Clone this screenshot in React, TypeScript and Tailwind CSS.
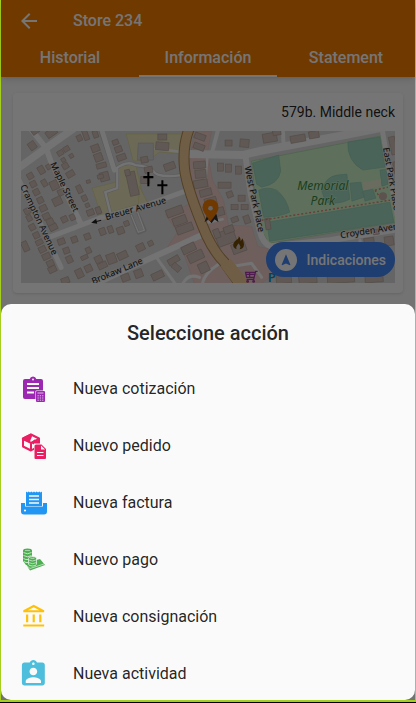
import type { ReactNode } from "react";
import { MdArrowBack, MdNavigation } from "react-icons/md";

type Block = [number, number, number, number, number];

const BUILDINGS: Block[] = [
  [31, 146, 7, 8, -35], [34, 131, 8, 6, -35], [50, 133, 11, 7, -35], [59, 153, 6, 5, -30], [65, 149, 6, 5, -30],
  [62, 160, 4, 4, -30], [70, 156, 4, 4, -30], [64, 166, 6, 6, -30], [69, 174, 8, 6, -30], [78, 138, 5, 6, -25],
  [84, 134, 5, 12, -20], [94, 134, 5, 7, -20], [94, 148, 8, 7, -20], [97, 157, 8, 8, -20], [100, 165, 10, 5, -15],
  [103, 176, 9, 9, -15], [99, 176, 6, 4, -15], [114, 142, 6, 5, -20], [117, 149, 7, 6, -20], [120, 157, 9, 6, -20],
  [40, 170, 6, 8, -30], [47, 167, 4, 5, -30], [43, 183, 5, 7, -30], [53, 185, 8, 9, -25], [60, 192, 7, 6, -25],
  [56, 201, 9, 8, -25], [78, 189, 5, 8, -25], [87, 181, 4, 3, -15], [83, 198, 5, 6, -25], [86, 205, 4, 4, -25],
  [89, 212, 7, 6, -20], [97, 210, 5, 7, -20], [29, 176, 6, 6, -30], [32, 184, 6, 6, -28], [35, 192, 6, 6, -28],
  [39, 200, 6, 6, -26], [42, 208, 7, 6, -26], [45, 216, 7, 6, -26], [49, 222, 7, 7, -26], [52, 227, 8, 6, -26],
  [26, 211, 6, 6, -28], [28, 218, 5, 6, -28], [31, 227, 6, 6, -28], [35, 235, 6, 6, -26], [38, 242, 7, 5, -26],
  [41, 249, 7, 6, -26], [45, 256, 8, 6, -25], [49, 263, 7, 6, -25], [51, 269, 8, 6, -25], [24, 246, 6, 10, -25],
  [60, 241, 7, 6, -20], [65, 250, 6, 6, -20], [68, 259, 6, 7, -25], [63, 219, 6, 6, -25], [71, 217, 5, 6, -25],
  [73, 239, 6, 6, -20], [86, 236, 6, 6, -20], [101, 231, 6, 7, -20], [109, 229, 5, 7, -20], [119, 230, 7, 7, -20],
  [125, 223, 5, 5, -20], [83, 257, 7, 4, -25], [87, 250, 5, 6, -25], [78, 273, 7, 9, -25], [87, 268, 7, 7, -25],
  [97, 259, 7, 7, -25], [101, 265, 9, 6, -25], [110, 258, 9, 10, -20], [121, 255, 10, 7, -25], [139, 247, 8, 7, -25],
  [149, 243, 5, 5, -25], [64, 280, 8, 6, -20], [124, 277, 8, 7, -20], [137, 273, 8, 8, -20], [131, 183, 9, 24, -12],
  [126, 172, 5, 6, -12], [143, 159, 7, 6, -10], [144, 179, 9, 7, 0], [161, 145, 13, 8, 5], [161, 136, 9, 6, 0],
  [168, 166, 11, 7, -20], [147, 169, 8, 6, -10], [199, 135, 11, 6, 20], [198, 145, 11, 6, 20], [227, 142, 7, 6, 0],
  [243, 142, 9, 8, 5], [268, 137, 14, 9, -10], [296, 138, 15, 7, -10], [312, 134, 10, 7, -10], [275, 132, 8, 5, -10],
  [219, 166, 6, 8, 0], [227, 167, 6, 8, 0], [237, 169, 6, 8, 0], [223, 184, 13, 6, 0], [228, 194, 6, 6, -20],
  [233, 206, 7, 5, 0], [240, 197, 7, 6, 0], [243, 206, 7, 5, 0], [245, 219, 6, 8, -20], [233, 219, 7, 5, -20],
  [198, 164, 12, 7, -5], [199, 173, 11, 8, -5], [199, 183, 14, 8, -10], [204, 192, 12, 7, -15], [209, 201, 12, 8, -15],
  [218, 211, 9, 8, -15], [173, 211, 17, 8, -20], [178, 220, 14, 8, -20], [183, 228, 17, 8, -20], [187, 248, 14, 8, -25],
  [194, 256, 16, 9, -25], [202, 267, 10, 10, -25], [172, 260, 12, 6, -30], [176, 265, 9, 6, 40], [156, 275, 12, 7, -25],
  [224, 237, 19, 14, -20], [237, 247, 14, 10, -20], [227, 229, 10, 7, -20], [215, 233, 6, 9, -20], [282, 277, 15, 10, -5],
  [306, 278, 18, 8, -5], [339, 277, 27, 9, -4], [372, 276, 18, 10, -4], [367, 240, 10, 6, -8], [387, 240, 9, 9, -8],
  [374, 231, 6, 5, -8], [391, 145, 6, 18, -12], [394, 167, 5, 12, -12], [266, 223, 5, 11, -8],
];

function Pitches() {
  return (
    <g fill="#a3d9c4" stroke="#8fcab4" strokeWidth="0.6">
      <path d="M253 163 279 155 281 171Q279 184 262 187L257 184Z" />
      <path d="M259 190Q268 186 277 190 287 198 290 212 278 217 264 217Z" />
      <path d="M348 142 380 137 385 167 363 170Q347 161 348 142Z" />
      <path d="M322 191Q325 177 337 175L347 174 350 199Q338 205 326 202Z" />
      <path d="M350 183 361 182 364 197 352 201Z" />
      <path d="M363 191 373 189 376 198 365 201Z" />
      <path d="M380 170 387 169 388 184 382 186Z" />
      <path d="M267 222 390 202 394 222 270 241Z" />
    </g>
  );
}

function StreetMap() {
  return (
    <svg viewBox="22 131 373 152" className="block w-full" role="img" aria-label="Mapa">
      <rect x="22" y="131" width="373" height="152" fill="#dddcdc" />
      <g fill="#ebe8bd" stroke="#d9d58f" strokeWidth="0.7">
        <path d="M127 134H186L183 154 160 152 150 160 134 161Z" />
        <path d="M93 188 117 182 118 167 136 163 145 202 102 215Z" />
        <path d="M140 186 150 206 139 210Z" />
      </g>
      <path d="M139 143H154V160H138Z" fill="#d6d6d6" stroke="#b9b9b9" strokeWidth="0.6" />
      <g fill="#efd0cb" stroke="#e3beb8" strokeWidth="0.5">
        <path d="M195 131H212L208 153 213 180 224 200 229 225 252 226 258 246 285 252 282 268 262 283H245L205 235 187 180Z" />
        <path d="M166 214 190 204 204 234 166 250 178 232Z" />
        <path d="M182 247 203 238 235 283H195Z" />
      </g>
      <path d="M252 161 381 136 397 222 269 243 258 222Z" fill="#cdf5c9" stroke="#add8a9" strokeWidth="0.8" />
      <Pitches />
      <path d="M363 182 381 179V186L364 190Z" fill="#e4ecd0" />
      <g fill="none" stroke="#c9c7c7" strokeLinecap="round" strokeLinejoin="round">
        <path d="M102 130 115 169" strokeWidth="6" />
        <path d="M116 169Q128 160 136 165 150 166 154 171 158 178 182 175M118 169 118 188 106 192 111 212" strokeWidth="3.6" />
        <path d="M132 215 139 233 146 230 138 211" strokeWidth="3" />
      </g>
      <g fill="none" stroke="#fafafa" strokeLinecap="round" strokeLinejoin="round">
        <path d="M30 127 47 148 52 162 82 224" strokeWidth="5.5" />
        <path d="M18 169 47 148 74 129" strokeWidth="7.5" />
        <path d="M20 180 35 210 62 267" strokeWidth="5" />
        <path d="M50 237 100 218 150 204 186 191" strokeWidth="5" />
        <path d="M82 290 140 263 204 234" strokeWidth="6" />
        <path d="M102 128 115 170" strokeWidth="5" />
        <path d="M116 169Q128 160 136 165 150 166 154 171 158 178 182 175M118 169 118 188 106 192 111 212M156 149 184 152" strokeWidth="2.4" />
        <path d="M132 215 139 232 145 230 138 211" strokeWidth="1.2" />
        <path d="M157 257 177 285M203 283Q205 273 219 264M182 286Q188 272 200 277" strokeWidth="3" />
        <path d="M190 154 243 155 260 151 345 135 396 125" strokeWidth="8" />
        <path d="M219 128 213 151" strokeWidth="4" />
        <path d="M208 156 206 178M205 223 223 219" strokeWidth="2.6" />
        <path d="M283 128 284 146" strokeWidth="4" />
        <path d="M246 157 251 193 260 230Q263 243 271 246L330 240 397 229" strokeWidth="6" />
        <path d="M382 128 390 175 397 215" strokeWidth="5" />
        <path d="M233 266 252 263 262 277M360 240 368 272" strokeWidth="3" />
      </g>
      <g fill="#d0c0b7" stroke="#b29e92" strokeWidth="0.6">
        {BUILDINGS.map(([x, y, w, h, turn]) => (
          <rect key={`${x}-${y}`} x={x - w / 2 + 2} y={y - h / 2 + 1} width={w} height={h} transform={`rotate(${turn} ${x} ${y})`} />
        ))}
      </g>
      <g fill="none" strokeLinejoin="round">
        <path d="M190 128Q183 145 185 168 187 188 207 235 215 252 224 261L245 290" stroke="#b28c55" strokeWidth="11" />
        <path d="M190 128Q183 145 185 168 187 188 207 235 215 252 224 261L245 290" stroke="#f2cd97" strokeWidth="9" />
        <path d="M226 262 246 288" stroke="#f2cd97" strokeWidth="13" />
      </g>
      <path d="M262 220 390 200M375 190 388 187M375 190 380 197" fill="none" stroke="#e8837a" strokeWidth="1.4" strokeDasharray="2 2" />
      <circle cx="383" cy="196" r="4" fill="#c9b4ab" />
      <g fontFamily="Noto Sans, sans-serif" fontSize="9" fill="#222" stroke="#e8e8e8" strokeWidth="1.4" paintOrder="stroke">
        <text transform="translate(51 164) rotate(64)">Maple Street</text>
        <text transform="translate(21 186) rotate(65)">Crampton Avenue</text>
        <text transform="translate(107 220) rotate(-16)">Breuer Avenue</text>
        <text transform="translate(94 284) rotate(-23)">Brokaw Lane</text>
        <text transform="translate(245 167) rotate(78)">West Park Place</text>
        <text transform="translate(383 148) rotate(80)">East Park Place</text>
        <text transform="translate(341 238) rotate(-9)">Croyden Avenue</text>
      </g>
      <path d="M94 222 102 220" stroke="#222" strokeWidth="1.2" />
      <path d="M92 222.500 97 218.500 98 223.500Z" fill="#222" />
      <g fontFamily="Noto Sans, sans-serif" fontSize="12" fontStyle="italic" textAnchor="middle" fill="#3a8a45" stroke="#cdf5c9" strokeWidth="1" paintOrder="stroke">
        <text x="323" y="190">Memorial</text>
        <text x="323" y="205">Park</text>
      </g>
      <path d="M149 172V186M144 177H154M163 180V194M158 185H168" stroke="#000" strokeWidth="2" />
      <path d="M205 222 208 214H217L219 222 215 219 212 223 209 219Z" fill="#333" />
      <path d="M211 199a8 8 0 0 0-8 8c0 5.500 8 14 8 14s8-8.500 8-14a8 8 0 0 0-8-8z" fill="#f57c00" />
      <circle cx="211" cy="208" r="2.300" fill="#ddd" />
      <path d="M239 236c1 3-3 3-5 7-1 3 0 5 3 6-1-3 1-4 2-6 1 2 3 3 1 6 4 0 5-4 4-7l-1-4-2 3c0-2 0-4-2-5z" fill="#734a08" />
      <g fill="none" stroke="#ac39ac" strokeWidth="1.3">
        <path d="M258 271H256L254 279H247M256 272H246L247 277H254M247 274H256M250 272V277" />
        <circle cx="248" cy="281" r="0.800" />
        <circle cx="254" cy="281" r="0.800" />
      </g>
      <text x="268" y="282" fontFamily="Noto Sans, sans-serif" fontSize="13" fontWeight="600" fill="#0092da">P</text>
    </svg>
  );
}

function ActionIcon({ box = "0 0 28 28", children }: { box?: string; children: ReactNode }) {
  return (
    <svg viewBox={box} className="-my-1 h-7 w-7 shrink-0" fill="currentColor" aria-hidden="true">
      {children}
    </svg>
  );
}

function QuoteIcon() {
  return (
    <ActionIcon>
      <path d="M5 4H9.700a3.400 3.400 0 0 1 6.600 0H21a2 2 0 0 1 2 2V22a2 2 0 0 1-2 2H5a2 2 0 0 1-2-2V6a2 2 0 0 1 2-2Z" />
      <circle cx="13" cy="4.500" r="1" fill="#fafafa" />
      <path d="M7 9H19M7 13H19M7 17.500H14" stroke="#fafafa" strokeWidth="2" />
      <rect x="15.500" y="15.500" width="10" height="12" rx="1" fill="#fafafa" />
      <rect x="16" y="16" width="9" height="11" rx="1" />
      <path d="M17.500 18H23.500" stroke="#d7a8df" strokeWidth="1.200" />
      <path d="M17.500 20.800H23.500M17.500 23H23.500M17.500 25.200H23.500" stroke="#e3bdea" strokeWidth="1" strokeDasharray="1.300 1" />
    </ActionIcon>
  );
}

function OrderIcon() {
  return (
    <ActionIcon>
      <path d="M11 2.500 19 6.500V14L11 18.500 3 14.500V6.500Z" fill="none" stroke="currentColor" strokeWidth="2" strokeLinejoin="round" />
      <path d="M3 7 11 11 19 7M11 11V18" fill="none" stroke="currentColor" strokeWidth="2" />
      <path d="M1.500 7 3 5.500 11 1.500 12 4.500 9.500 10.500ZM11 11 14.500 7.500 20 9.500V12L14 12.500Z" />
      <path d="M14 11.500H22L26.500 16V27.500H14Z" fill="#fafafa" />
      <path d="M16 12.500H21.500L26 17V26a1 1 0 0 1-1 1H15.500a1 1 0 0 1-1-1V14a1.500 1.500 0 0 1 1.500-1.500Z" />
      <path d="M21 13.500V17.500H25Z" fill="#fafafa" />
      <path d="M17 20.500H23.500M17 23.500H23.500" stroke="#fafafa" strokeWidth="1.200" />
    </ActionIcon>
  );
}

function InvoiceIcon() {
  return (
    <ActionIcon>
      <path d="M1 14H5V17.500H23V14H27V22.500a3 3 0 0 1-3 3H4a3 3 0 0 1-3-3Z" />
      <path d="M6 2.500 7.300 3.500 8.700 2.500 10 3.500 11.300 2.500 12.700 3.500 14 2.500 15.300 3.500 16.700 2.500 18 3.500 19.300 2.500 20.700 3.500 22 2.500V17H6Z" />
      <path d="M9 7H19M9 10.500H19M9 14H19" stroke="#fafafa" strokeWidth="1.300" />
      <circle cx="5" cy="21.500" r="1.100" fill="#fafafa" />
    </ActionIcon>
  );
}

function PaymentIcon() {
  return (
    <ActionIcon>
      <path d="M5 17 20 13 25 19 10 24.500Z" />
      <path d="M6 19 10 22.500 24 18" fill="none" stroke="#fafafa" strokeWidth="0.600" />
      <path d="M3 4.500V15L6 19H12V4.500Z" />
      <ellipse cx="7.500" cy="4.500" rx="4.500" ry="2" />
      <path d="M3.500 6.500Q7.500 9 11.500 6.500M3.500 9.500Q7.500 12 11.500 9.500M3.500 12.500Q6 14 8 13.500M4 15.500Q6 17 8 16.500" fill="none" stroke="#fafafa" strokeWidth="0.700" />
      <path d="M5 4.500H10" stroke="#a9d8ab" strokeWidth="0.900" />
      <path d="M8.500 12.500a4 2 0 0 1 8 0V18a4 2 0 0 1-8 0Z" stroke="#fafafa" strokeWidth="0.700" />
      <path d="M9 14Q12.500 16 16 14M9 16.700Q12.500 18.700 16 16.700M10.500 12.300H14.500" fill="none" stroke="#fafafa" strokeWidth="0.600" />
    </ActionIcon>
  );
}

function ConsignmentIcon() {
  return (
    <ActionIcon box="-1 -0.500 25.500 25.500">
      <path d="M6.500 10h-2v7h2v-7zm6 0h-2v7h2v-7zm8.500 9H2v2h19v-2zm-2.500-9h-2v7h2v-7zm-7-6.740L16.710 6H6.290l5.210-2.740m0-2.260L2 6v2h19V6l-9.500-5z" />
    </ActionIcon>
  );
}

function ActivityIcon() {
  return (
    <ActionIcon box="1.500 1 22 22">
      <path d="M19 3h-4.180C14.400 1.840 13.300 1 12 1c-1.300 0-2.400.84-2.820 2H5c-1.100 0-2 .9-2 2v14c0 1.100.9 2 2 2h14c1.100 0 2-.9 2-2V5c0-1.100-.9-2-2-2zm-7 0c.55 0 1 .45 1 1s-.45 1-1 1-1-.45-1-1 .45-1 1-1zm0 4c1.660 0 3 1.340 3 3s-1.340 3-3 3-3-1.340-3-3 1.340-3 3-3zm6 12H6v-1.400c0-2 4-3.100 6-3.100s6 1.100 6 3.100V19z" />
    </ActionIcon>
  );
}

const ACTIONS = [
  { label: "Nueva cotización", tone: "text-[#9c27b0]", icon: <QuoteIcon /> },
  { label: "Nuevo pedido", tone: "text-[#e91e63]", icon: <OrderIcon /> },
  { label: "Nueva factura", tone: "text-[#2196f3]", icon: <InvoiceIcon /> },
  { label: "Nuevo pago", tone: "text-[#4caf50]", icon: <PaymentIcon /> },
  { label: "Nueva consignación", tone: "text-[#ffc107]", icon: <ConsignmentIcon /> },
  { label: "Nueva actividad", tone: "text-[#4dbfdc]", icon: <ActivityIcon /> },
];

const TABS = ["Historial", "Información", "Statement"];

export default function App() {
  return (
    <div className="flex min-h-screen flex-col border-b border-black bg-[#a4cf1c] px-px pb-0.5 font-['Roboto',sans-serif]">
      <div className="relative flex flex-1 flex-col bg-[#fafafa]">
        <header className="bg-[#f57c00] text-white shadow-md">
          <div className="flex h-[41px] items-center gap-8 pl-4">
            <button type="button" aria-label="Volver">
              <MdArrowBack className="h-6 w-6" />
            </button>
            <h1 className="text-base font-medium">Store 234</h1>
          </div>
          <div role="tablist" className="grid grid-cols-3">
            {TABS.map((tab) => (
              <button
                key={tab}
                type="button"
                role="tab"
                aria-selected={tab === "Información"}
                className={`h-9 border-b-2 text-base font-medium ${tab === "Información" ? "border-white" : "border-transparent"}`}
              >
                {tab}
              </button>
            ))}
          </div>
        </header>

        <main className="px-3 pt-4">
          <section className="relative rounded bg-white px-2 pb-2.5 shadow">
            <p className="flex h-[38px] items-center justify-end text-sm text-black/87">579b. Middle neck</p>
            <StreetMap />
            <button
              type="button"
              className="absolute right-2 bottom-4 flex h-[35px] items-center gap-2.5 rounded-full bg-[#4285f4] px-[9px] text-sm font-medium text-white"
            >
              <span className="flex h-[22px] w-[22px] items-center justify-center rounded-full bg-white text-[#4285f4]">
                <MdNavigation className="h-3.5 w-3.5" />
              </span>
              Indicaciones
            </button>
          </section>
        </main>

        <div className="absolute inset-0 flex flex-col justify-end bg-black/54">
          <section role="dialog" aria-labelledby="sheet-title" className="rounded-[10px] bg-[#fafafa] pb-3.5 text-black/87">
            <h2 id="sheet-title" className="flex h-[58px] items-center justify-center text-xl font-medium">
              Seleccione acción
            </h2>
            <ul className="flex flex-col gap-8 pt-3.5">
              {ACTIONS.map(({ label, tone, icon }) => (
                <li key={label}>
                  <button type="button" className="flex h-[25px] w-full items-center gap-[25px] pl-[19px] text-left text-base">
                    <span className={tone}>{icon}</span>
                    {label}
                  </button>
                </li>
              ))}
            </ul>
          </section>
        </div>
      </div>
    </div>
  );
}
